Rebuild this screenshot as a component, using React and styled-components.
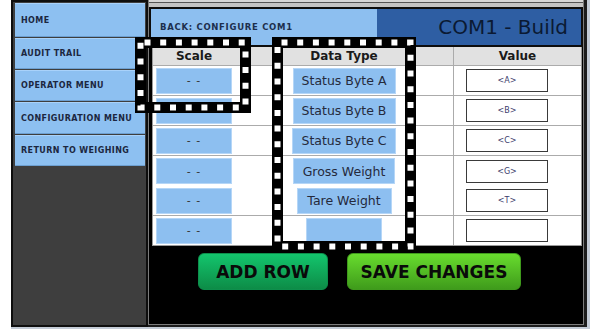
import styled, { createGlobalStyle } from 'styled-components';

const GlobalStyle = createGlobalStyle`
  html, body {
    margin: 0;
    padding: 0;
    background: #fff;
  }
  body {
    font-family: "DejaVu Sans", Verdana, sans-serif;
  }
  * {
    box-sizing: border-box;
  }
`;

const menu = [
  { label: 'HOME', h: 34 },
  { label: 'AUDIT TRAIL', h: 31 },
  { label: 'OPERATOR MENU', h: 31 },
  { label: 'CONFIGURATION MENU', h: 32 },
  { label: 'RETURN TO WEIGHING', h: 31 },
];

const rows = [
  { type: 'Status Byte A', w: 103, value: '<A>' },
  { type: 'Status Byte B', w: 103, value: '<B>' },
  { type: 'Status Byte C', w: 104, value: '<C>' },
  { type: 'Gross Weight', w: 102, value: '<G>', noLine: true },
  { type: 'Tare Weight', w: 95, value: '<T>' },
  { type: '', w: 76, value: '' },
];

function Marquee({ left, top, width, height }) {
  return (
    <MarqueeBox $left={left} $top={top} $w={width} $h={height}>
      <svg width={width} height={height}>
        <rect x="5.5" y="5.5" width={width - 11} height={height - 11} fill="none" stroke="#000" strokeWidth="11" />
        <rect
          x="5.5"
          y="5.5"
          width={width - 11}
          height={height - 11}
          fill="none"
          stroke="#fff"
          strokeWidth="6"
          strokeDasharray="6 9.7"
          strokeDashoffset="-4"
        />
      </svg>
    </MarqueeBox>
  );
}

function App() {
  return (
    <>
      <GlobalStyle />
      <Frame>
        <Sidebar>
          {menu.map((m) => (
            <MenuItem key={m.label} $h={m.h}>{m.label}</MenuItem>
          ))}
        </Sidebar>
        <Main>
          <TopStrip />
          <Header>
            <BackLink>BACK: CONFIGURE COM1</BackLink>
            <Title>COM1 - Build</Title>
          </Header>
          <Table>
            <HeadRow>
              <HeadCell>Scale</HeadCell>
              <HeadCell />
              <HeadCell>Data Type</HeadCell>
              <HeadCell />
              <HeadCell $divider>Value</HeadCell>
            </HeadRow>
            {rows.map((r, i) => (
              <Row key={i} $noLine={r.noLine || i === rows.length - 1} $last={i === rows.length - 1}>
                <Cell>
                  <ScaleBox>- -</ScaleBox>
                </Cell>
                <Cell />
                <Cell>
                  <TypeBox style={{ width: r.w }}>{r.type}</TypeBox>
                </Cell>
                <Cell />
                <Cell $divider $start>
                  <ValueBox>{r.value}</ValueBox>
                </Cell>
              </Row>
            ))}
          </Table>
          <Actions>
            <ActionButton $variant="add">ADD ROW</ActionButton>
            <ActionButton $variant="save">SAVE CHANGES</ActionButton>
          </Actions>
        </Main>
        <Marquee left={124} top={37} width={116} height={76} />
        <Marquee left={261} top={37} width={144} height={215} />
      </Frame>
    </>
  );
}

export default App;

const Frame = styled.div`
  position: relative;
  display: flex;
  margin-left: 11px;
  width: 579px;
  height: 329px;
  background: #1c1c1c;
  border-right: 3px solid #c3cbd6;
  border-bottom: 2px solid #c3cbd6;
`;

const Sidebar = styled.div`
  display: flex;
  flex-direction: column;
  gap: 1px;
  width: 137px;
  padding: 1px 1px 0 2px;
  background: #3e3e3e;
  border: 2px solid #0e0e0e;
`;

const MenuItem = styled.div`
  display: flex;
  align-items: center;
  height: ${(p) => p.$h}px;
  padding-left: 6px;
  background: #8dc0f1;
  border-top: 1px solid #a9d2fa;
  border-bottom: 1px solid #6d9fd0;
  color: #1c2740;
  font-size: 8px;
  font-weight: bold;
  letter-spacing: 0.4px;
  white-space: nowrap;
`;

const Main = styled.div`
  flex: 1;
  display: flex;
  flex-direction: column;
  margin: 0 3px 2px 0;
  background: #000;
  border: 1px solid #7c7c7c;
  border-top: none;
`;

const TopStrip = styled.div`
  height: 7px;
  background: linear-gradient(#d6d6d6 0 2px, #555 2px 3px, #c4c4c4 3px);
`;

const Header = styled.div`
  display: flex;
  height: 40px;
  border: 2px solid #0d0d0d;
`;

const BackLink = styled.div`
  display: flex;
  align-items: center;
  width: 226px;
  padding-left: 9px;
  background: #8dbff0;
  color: #1d2f4d;
  font-size: 8.5px;
  font-weight: bold;
  letter-spacing: 0.7px;
  white-space: nowrap;
`;

const Title = styled.div`
  flex: 1;
  display: flex;
  align-items: center;
  justify-content: flex-end;
  padding-right: 13px;
  background: #2e5ea3;
  color: #0b1a33;
  font-size: 20px;
`;

const Table = styled.div`
  margin: 0 1px 0 3px;
  background: #fff;
  border: 1px solid #9a9a9a;
  border-top: none;
`;

const cols = '82px 38px 142px 38px 1fr';

const HeadRow = styled.div`
  display: grid;
  grid-template-columns: ${cols};
  height: 19px;
  background: #e1e1e1;
  border-bottom: 1px solid #ababab;
`;

const HeadCell = styled.div`
  display: flex;
  align-items: center;
  justify-content: center;
  color: #1a1a1a;
  font-size: 12px;
  font-weight: bold;
  border-left: ${(p) => (p.$divider ? '1px solid #ababab' : 'none')};
`;

const Row = styled.div`
  display: grid;
  grid-template-columns: ${cols};
  height: ${(p) => (p.$last ? 29 : 30)}px;
  border-bottom: ${(p) => (p.$noLine ? 'none' : '1px solid #ababab')};
`;

const Cell = styled.div`
  display: flex;
  align-items: center;
  justify-content: ${(p) => (p.$start ? 'flex-start' : 'center')};
  border-left: ${(p) => (p.$divider ? '1px solid #ababab' : 'none')};
`;

const ScaleBox = styled.div`
  display: flex;
  align-items: center;
  justify-content: center;
  width: 76px;
  height: 26px;
  background: #8dbff0;
  border: 1px solid #b5d6f7;
  color: #333;
  font-size: 11px;
  letter-spacing: 1px;
`;

const TypeBox = styled.div`
  display: flex;
  align-items: center;
  justify-content: center;
  height: 26px;
  background: #8dbff0;
  border: 1px solid #b5d6f7;
  color: #252a3c;
  font-size: 12.5px;
  white-space: nowrap;
`;

const ValueBox = styled.div`
  display: flex;
  align-items: center;
  justify-content: center;
  width: 82px;
  height: 23px;
  margin-left: 12px;
  background: #fff;
  border: 1.5px solid #3a3a3a;
  color: #3c3c6c;
  font-size: 8px;
`;

const Actions = styled.div`
  display: flex;
  gap: 19px;
  padding: 7px 0 0 49px;
`;

const ActionButton = styled.button`
  width: ${(p) => (p.$variant === 'add' ? 130 : 174)}px;
  height: 37px;
  border-radius: 6px;
  border: 1px solid ${(p) => (p.$variant === 'add' ? '#0d8f4c' : '#3f9a1c')};
  background: ${(p) =>
    p.$variant === 'add'
      ? 'linear-gradient(#13c56d, #0d8c47)'
      : 'linear-gradient(#68dc2e, #3f9b1b)'};
  color: #0a0a0a;
  font-family: "DejaVu Sans", Verdana, sans-serif;
  font-size: 17px;
  font-weight: bold;
  padding: 0;
  cursor: pointer;
`;

const MarqueeBox = styled.div`
  position: absolute;
  left: ${(p) => p.$left}px;
  top: ${(p) => p.$top}px;
  width: ${(p) => p.$w}px;
  height: ${(p) => p.$h}px;
  pointer-events: none;

  svg {
    display: block;
  }
`;
